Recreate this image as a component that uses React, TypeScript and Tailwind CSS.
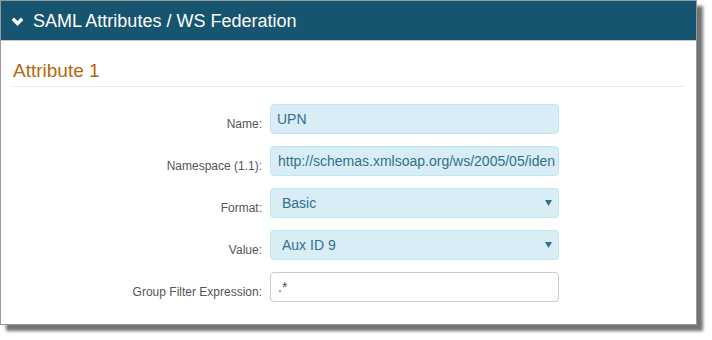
import React from "react";

const font = { fontFamily: '"Liberation Sans", Arial, sans-serif' };

function Row({ label, children, last }: { label: string; children: React.ReactNode; last?: boolean }) {
  return (
    <div className={`flex ${last ? "" : "mb-[12px]"}`}>
      <div className="w-[257px] shrink-0 text-right pr-[8px] pt-[13px] text-[12px] leading-[14px] text-[#555]">
        {label}
      </div>
      <div className="w-[289px] h-[30px]">{children}</div>
    </div>
  );
}

function InfoBox({ text, select, pl }: { text: string; select?: boolean; pl: string }) {
  return (
    <div className={`relative h-full w-full rounded-[4px] border border-[#bce8f1] bg-[#d9edf7] text-[#31708f] text-[14px] leading-[28px] overflow-hidden whitespace-nowrap ${pl}`}>
      {text}
      {select && (
        <svg className="absolute right-[6px] top-[11px]" width="7" height="6" viewBox="0 0 7 6">
          <polygon points="0,0 7,0 3.5,6" fill="#31708f" />
        </svg>
      )}
    </div>
  );
}

export default function App() {
  return (
    <div className="w-[712px] h-[340px] bg-white" style={font}>
      <div className="w-[697px] h-[325px] border border-[#9a9a9a] bg-white shadow-[6px_6px_3px_rgba(0,0,0,0.55)] flex flex-col">
        <div className="h-[40px] bg-[#165470] flex items-center border-b border-[#c8c8c8]">
          <svg className="ml-[10px] mr-[9px] mt-[1px]" width="13" height="9" viewBox="0 0 13 9">
            <polyline points="1.8,1.8 6.5,6.5 11.2,1.8" fill="none" stroke="#fff" strokeWidth="3.4" />
          </svg>
          <span className="text-white text-[18px] leading-[20px]">SAML Attributes / WS Federation</span>
        </div>
        <div className="px-[12px]">
          <div className="pt-[20px] pb-[5px] border-b border-[#e6e6e6] text-[19px] leading-[20px] text-[#b8660c]">
            Attribute 1
          </div>
          <div className="pt-[17px]">
            <Row label="Name:">
              <InfoBox text="UPN" pl="pl-[6px]" />
            </Row>
            <Row label="Namespace (1.1):">
              <InfoBox text="http://schemas.xmlsoap.org/ws/2005/05/iden" pl="pl-[7px]" />
            </Row>
            <Row label="Format:">
              <InfoBox text="Basic" select pl="pl-[11px]" />
            </Row>
            <Row label="Value:">
              <InfoBox text="Aux ID 9" select pl="pl-[11px]" />
            </Row>
            <Row label="Group Filter Expression:" last>
              <div className="h-full w-full rounded-[4px] border border-[#ccc] bg-white text-[#555] text-[14px] leading-[28px] pl-[7px]">
                .*
              </div>
            </Row>
          </div>
        </div>
      </div>
    </div>
  );
}
